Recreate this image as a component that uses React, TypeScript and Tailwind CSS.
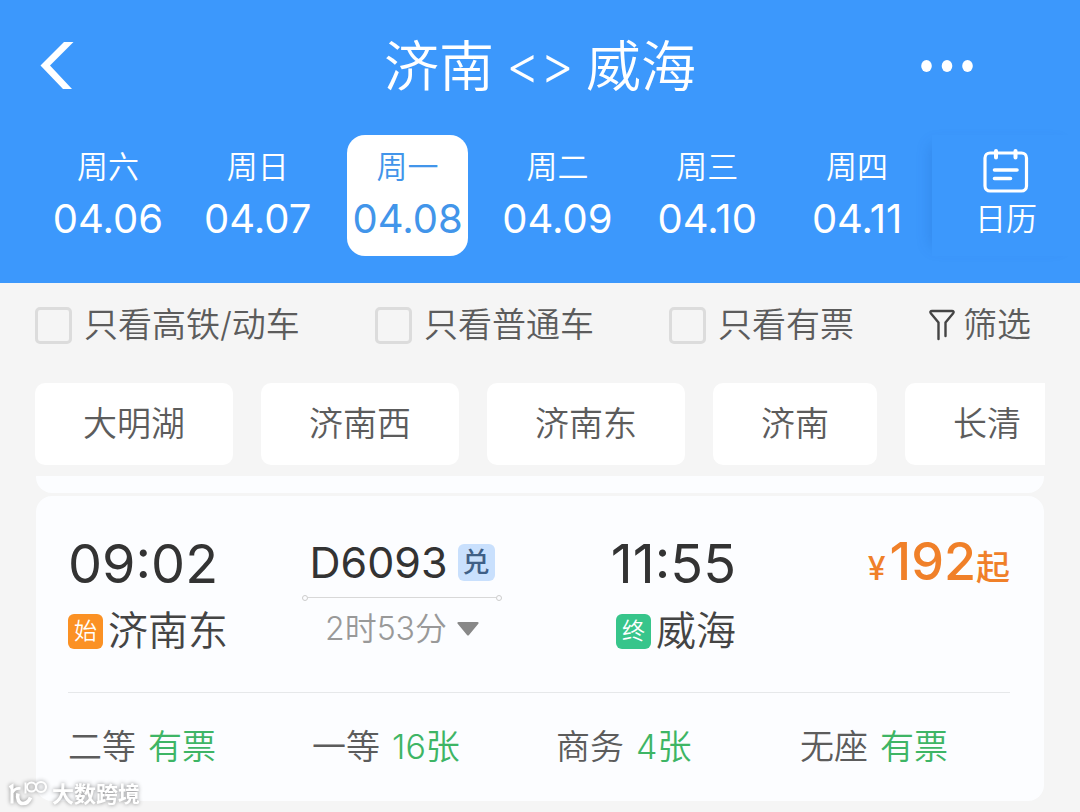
import { useState } from "react";

interface Day {
  week: string;
  date: string;
}

interface Seat {
  name: string;
  left: string;
}

const days: Day[] = [
  { week: "周六", date: "04.06" },
  { week: "周日", date: "04.07" },
  { week: "周一", date: "04.08" },
  { week: "周二", date: "04.09" },
  { week: "周三", date: "04.10" },
  { week: "周四", date: "04.11" },
];

const filters = ["只看高铁/动车", "只看普通车", "只看有票"];

const stations = ["大明湖", "济南西", "济南东", "济南", "长清"];

const seats: Seat[] = [
  { name: "二等", left: "有票" },
  { name: "一等", left: "16张" },
  { name: "商务", left: "4张" },
  { name: "无座", left: "有票" },
];

function CalendarIcon() {
  return (
    <svg className="h-11 w-[46px]" viewBox="0 0 46 44" fill="none" stroke="currentColor" strokeLinecap="round">
      <rect x="2" y="4" width="41.500" height="38" rx="5" strokeWidth="3.2" />
      <path d="M13 2v6.500M32.500 2v6.500" strokeWidth="4" />
      <path d="M11.500 21h22.500M11.500 29.500h16" strokeWidth="3.6" />
    </svg>
  );
}

function FunnelIcon() {
  return (
    <svg className="h-8 w-[26px]" viewBox="0 0 26 32" fill="none" stroke="#444" strokeWidth="2.4" strokeLinecap="round" strokeLinejoin="round">
      <path d="M9.500 30V13.500L1.800 4.200C1 3 1.500 2 3 2h20c1.500 0 2 1 1.200 2.200L16.500 13.500V27" />
    </svg>
  );
}

function Watermark() {
  return (
    <div className="absolute bottom-1 left-2 flex items-center gap-1 text-white drop-shadow-[0_0_2px_rgba(0,0,0,0.45)]">
      <svg className="h-7 w-10" viewBox="0 0 40 28" fill="none" stroke="currentColor">
        <path d="M1.500 7.500L4 6v17.500" strokeWidth="3" />
        <path d="M4.500 12.500C6 9.500 9 8 12.500 8.500" strokeWidth="2.6" />
        <path d="M10 13.500C8.500 19 11 23.500 15 23.500C19 23.500 21 21.500 22.500 17.500" strokeWidth="3.6" />
        <path d="M17.500 2.500v11" strokeWidth="2" />
        <circle cx="23.500" cy="7" r="4.500" strokeWidth="2" />
        <circle cx="33" cy="7" r="5" strokeWidth="2.200" />
      </svg>
      <span className="text-[22px] leading-7 font-bold">大数跨境</span>
    </div>
  );
}

export default function App() {
  const [active, setActive] = useState("04.08");

  return (
    <div className="relative min-h-screen overflow-hidden bg-[#f5f5f5] font-['Inter','Noto_Sans_CJK_SC',sans-serif] text-[#5c5c5c]">
      <header className="bg-[#3c98fc] pb-[27px] text-white">
        <div className="grid h-[132px] grid-cols-[1fr_auto_1fr] items-center">
          <button type="button" aria-label="返回" className="ml-10 justify-self-start">
            <svg className="h-12 w-9" viewBox="0 0 36 48" fill="currentColor">
              <path d="M24 0h9.500L10 23.500L32 47h-9L0.500 23.500Z" />
            </svg>
          </button>
          <h1 className="flex items-center gap-3 text-[55px] leading-[72px] font-[350]">
            <span>济南</span>
            <span className="text-[52px]">&lt;&gt;</span>
            <span>威海</span>
          </h1>
          <button type="button" aria-label="更多" className="mr-[107px] justify-self-end">
            <svg className="h-3 w-[52px]" viewBox="0 0 52 12" fill="currentColor">
              <ellipse cx="5.500" cy="6" rx="5.300" ry="6" />
              <ellipse cx="26" cy="6" rx="5.300" ry="6" />
              <ellipse cx="46.500" cy="6" rx="5.300" ry="6" />
            </svg>
          </button>
        </div>

        <nav className="flex pt-[3px] pl-[33px]">
          {days.map((day) => (
            <div key={day.date} className="flex flex-1 justify-center">
              <button
                type="button"
                onClick={() => setActive(day.date)}
                className={`flex h-[121px] w-[121px] flex-col items-center rounded-[18px] pt-[10px] ${
                  day.date === active ? "bg-white text-[#4295ea]" : ""
                }`}
              >
                <span className="text-[31px] leading-[44px] font-[350]">{day.week}</span>
                <span className="text-[40px] leading-[60px]">{day.date}</span>
              </button>
            </div>
          ))}
          <button
            type="button"
            className="flex w-[148px] flex-col items-center pt-[14px] shadow-[-10px_0_14px_-10px_rgba(20,80,170,0.25)]"
          >
            <CalendarIcon />
            <span className="mt-1 text-[31px] leading-[44px] font-[350]">日历</span>
          </button>
        </nav>
      </header>

      <div className="flex h-[84px] items-center justify-between pr-[49px] pl-[35px] text-[34px] leading-[48px] font-[350]">
        {filters.map((name) => (
          <label key={name} className="flex items-center gap-3">
            <input
              type="checkbox"
              className="h-[37px] w-[37px] appearance-none rounded-[5px] border-[3px] border-[#dcdcdc] checked:bg-[#3c98fc]"
            />
            {name}
          </label>
        ))}
        <button type="button" className="flex items-center gap-2">
          <FunnelIcon />
          筛选
        </button>
      </div>

      <div className="mx-[35px] mt-4 flex gap-7 overflow-hidden">
        {stations.map((name) => (
          <button
            key={name}
            type="button"
            className="h-[82px] shrink-0 rounded-[10px] bg-white px-12 text-[34px] leading-[48px] font-[350]"
          >
            {name}
          </button>
        ))}
      </div>

      <main className="mx-9 mt-[11px]">
        {/* bottom edge of the previous train */}
        <div className="h-[17px] rounded-b-2xl bg-[#fcfdff]" />

        <article className="mt-[3px] rounded-2xl bg-[#fcfdff] pt-9 pr-[34px] pl-8">
          <div className="grid grid-cols-[234fr_200fr_234fr_274fr] pb-[37px]">
            <div>
              <p className="text-[54px] leading-[64px] text-[#333]">09:02</p>
              <p className="mt-[11px] flex items-center gap-[5px] text-[40px] leading-[48px] font-[350] text-[#444]">
                <span className="w-[35px] rounded-md bg-[#fb9124] text-center text-[23px] leading-[35px] text-white">始</span>
                济南东
              </p>
            </div>

            <div className="flex flex-col items-center">
              <p className="flex items-center gap-[10px] text-[43px] leading-[60px] text-[#333]">
                D6093
                <span className="w-[37px] rounded-md bg-[#c9e0fd] text-center text-[27px] leading-[37px] font-medium text-[#3f5f86]">兑</span>
              </p>
              <div className="flex h-[11px] w-full items-center">
                <span className="h-[6px] w-[6px] rounded-full border border-[#ccc]" />
                <span className="h-px flex-1 bg-[#d8d8d8]" />
                <span className="h-[6px] w-[6px] rounded-full border border-[#ccc]" />
              </div>
              <button type="button" className="flex items-center gap-[10px] text-[32px] leading-[52px] font-[350] text-[#999]">
                2时53分
                <svg className="h-[14px] w-[22px]" viewBox="0 0 22 14" fill="#888">
                  <path d="M1.500 0h19c1 0 1.500 1 0.800 1.800L12 13q-1 1-2 0L0.700 1.800C0 1 0.500 0 1.500 0Z" />
                </svg>
              </button>
            </div>

            <div className="flex flex-col items-end">
              <p className="text-[54px] leading-[64px] text-[#333]">11:55</p>
              <p className="mt-[11px] flex items-center gap-[5px] text-[40px] leading-[48px] font-[350] text-[#444]">
                <span className="w-[35px] rounded-md bg-[#37c58b] text-center text-[23px] leading-[35px] text-white">终</span>
                威海
              </p>
            </div>

            <p className="flex items-baseline justify-end text-[34px] leading-[60px] font-medium text-[#f08029]">
              <span className="mr-1 text-[32px]">¥</span>
              <span className="text-[52px]">192</span>
              起
            </p>
          </div>

          <ul className="grid grid-cols-4 gap-[34px] border-t border-[#e6e8ea] text-[34px] leading-[108px] font-[350]">
            {seats.map((seat) => (
              <li key={seat.name} className="flex gap-3">
                {seat.name}
                <span className="text-[#3eb565]">{seat.left}</span>
              </li>
            ))}
          </ul>
        </article>
      </main>

      <Watermark />
    </div>
  );
}
